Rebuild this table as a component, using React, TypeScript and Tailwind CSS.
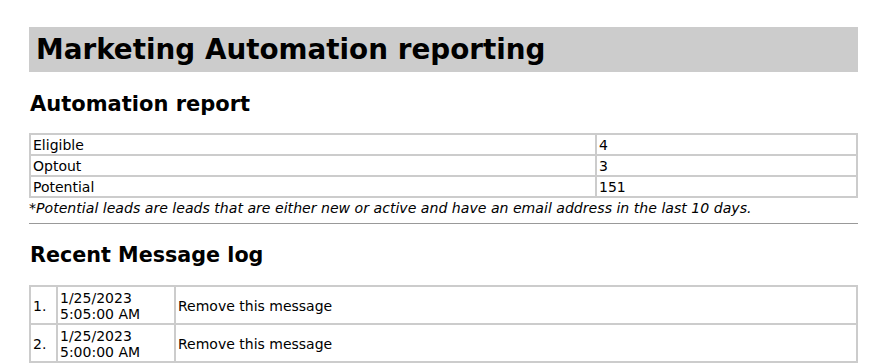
import React from 'react';

const stats = [
  { label: 'Eligible', value: '4' },
  { label: 'Optout', value: '3' },
  { label: 'Potential', value: '151' },
];

const messages = [
  { date: '1/25/2023', time: '5:05:00 AM', text: 'Remove this message' },
  { date: '1/25/2023', time: '5:00:00 AM', text: 'Remove this message' },
];

export default function App() {
  return (
    <div className="min-h-screen bg-white text-black font-['DejaVu_Sans',Verdana,sans-serif]">
      <div className="ml-[29px] w-[829px] pt-[27px]">
        {/* Page header */}
        <h1 className="h-[45px] bg-[#cccccc] pl-[7px] text-[27.8px] font-bold leading-[45px]">
          Marketing Automation reporting
        </h1>

        {/* Automation report */}
        <h2 className="mt-[19px] pl-px text-[21px] font-bold leading-[26px]">Automation report</h2>
        <table className="mt-[16px] w-full border-collapse border-2 border-[#cccccc] text-[14px]">
          <tbody>
            {stats.map((s) => (
              <tr key={s.label}>
                <td className="w-[566px] border-2 border-[#cccccc] px-[2px] pt-[2px] pb-0 leading-[17px]">{s.label}</td>
                <td className="border-2 border-[#cccccc] px-[2px] pt-[2px] pb-0 leading-[17px]">{s.value}</td>
              </tr>
            ))}
          </tbody>
        </table>
        <p className="pt-px text-[14.1px] italic leading-[18px]">
          *Potential leads are leads that are either new or active and have an email address in the last 10 days.
        </p>
        <hr className="mt-[6px] border-t border-[#999999]" />

        {/* Recent Message log */}
        <h2 className="mt-[18px] pl-px text-[20.7px] font-bold leading-[26px]">Recent Message log</h2>
        <table className="mt-[17px] w-full border-collapse border-2 border-[#cccccc] text-[14px]">
          <tbody>
            {messages.map((m, i) => (
              <tr key={i}>
                <td className="w-[27px] border-2 border-[#cccccc] px-[2px] pt-[3px] pb-px leading-[16px]">{i + 1}.</td>
                <td className="w-[118px] border-2 border-[#cccccc] px-[2px] pt-[3px] pb-px leading-[16px]">
                  {m.date}
                  <br />
                  {m.time}
                </td>
                <td className="border-2 border-[#cccccc] px-[2px] pt-[3px] pb-px leading-[16px]">{m.text}</td>
              </tr>
            ))}
          </tbody>
        </table>
      </div>
    </div>
  );
}
